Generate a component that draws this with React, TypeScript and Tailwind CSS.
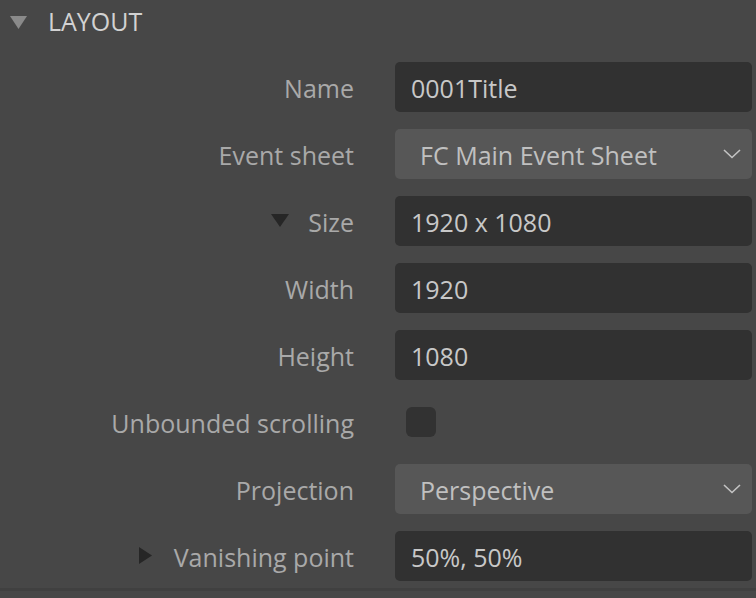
import React from "react";

function Chevron() {
  return (
    <svg width="18" height="10" viewBox="0 0 18 10" className="shrink-0">
      <path d="M1 1 L9 8.5 L17 1" fill="none" stroke="#c4c4c4" strokeWidth="1.6" />
    </svg>
  );
}

function Row({ label, children, caret }: { label: string; children: React.ReactNode; caret?: "down" | "right" }) {
  return (
    <div className="flex h-[67px] items-center">
      <div className="flex w-[395px] items-center justify-end pr-[41px]">
        {caret === "down" && (
          <svg width="18" height="13" viewBox="0 0 18 13" className="mr-[19px]">
            <path d="M0 0 H18 L9 13 Z" fill="#262626" />
          </svg>
        )}
        {caret === "right" && (
          <svg width="13" height="17" viewBox="0 0 13 17" className="mr-[22px]">
            <path d="M0 0 L13 8.5 L0 17 Z" fill="#262626" />
          </svg>
        )}
        <span className="pt-[4px] text-[#a9a9a9]">{label}</span>
      </div>
      <div className="flex-1 pr-[4px]">{children}</div>
    </div>
  );
}

function Field({ value }: { value: string }) {
  return (
    <div className="flex h-[50px] items-center rounded-[5px] bg-[#313131] px-[16px] text-[#c8c8c8]">
      <span className="pt-[4px]">{value}</span>
    </div>
  );
}

function Select({ value }: { value: string }) {
  return (
    <div className="flex h-[50px] items-center justify-between rounded-[5px] bg-[#575757] pl-[25px] pr-[11px] text-[#c0c0c0]">
      <span className="pt-[4px]">{value}</span>
      <Chevron />
    </div>
  );
}

export default function App() {
  return (
    <div
      className="h-[598px] w-[756px] overflow-hidden bg-[#474747] text-[25px]"
      style={{ fontFamily: '"Segoe UI", "Open Sans", "Noto Sans", sans-serif' }}
    >
      <div className="flex h-[44px] items-center">
        <svg width="17" height="13" viewBox="0 0 17 13" className="ml-[10px] mr-[21px]">
          <path d="M0 0 H17 L8.5 13 Z" fill="#8a8a8a" />
        </svg>
        <span className="text-[#d2d2d2]">LAYOUT</span>
      </div>
      <div className="pt-[9px]">
        <Row label="Name">
          <Field value="0001Title" />
        </Row>
        <Row label="Event sheet">
          <Select value="FC Main Event Sheet" />
        </Row>
        <Row label="Size" caret="down">
          <Field value="1920 x 1080" />
        </Row>
        <Row label="Width">
          <Field value="1920" />
        </Row>
        <Row label="Height">
          <Field value="1080" />
        </Row>
        <Row label="Unbounded scrolling">
          <div className="ml-[11px] h-[30px] w-[30px] rounded-[6px] bg-[#323232]" />
        </Row>
        <Row label="Projection">
          <Select value="Perspective" />
        </Row>
        <Row label="Vanishing point" caret="right">
          <Field value="50%, 50%" />
        </Row>
      </div>
      <div className="mt-[-1px] h-[3px] bg-[#404040]" />
    </div>
  );
}
